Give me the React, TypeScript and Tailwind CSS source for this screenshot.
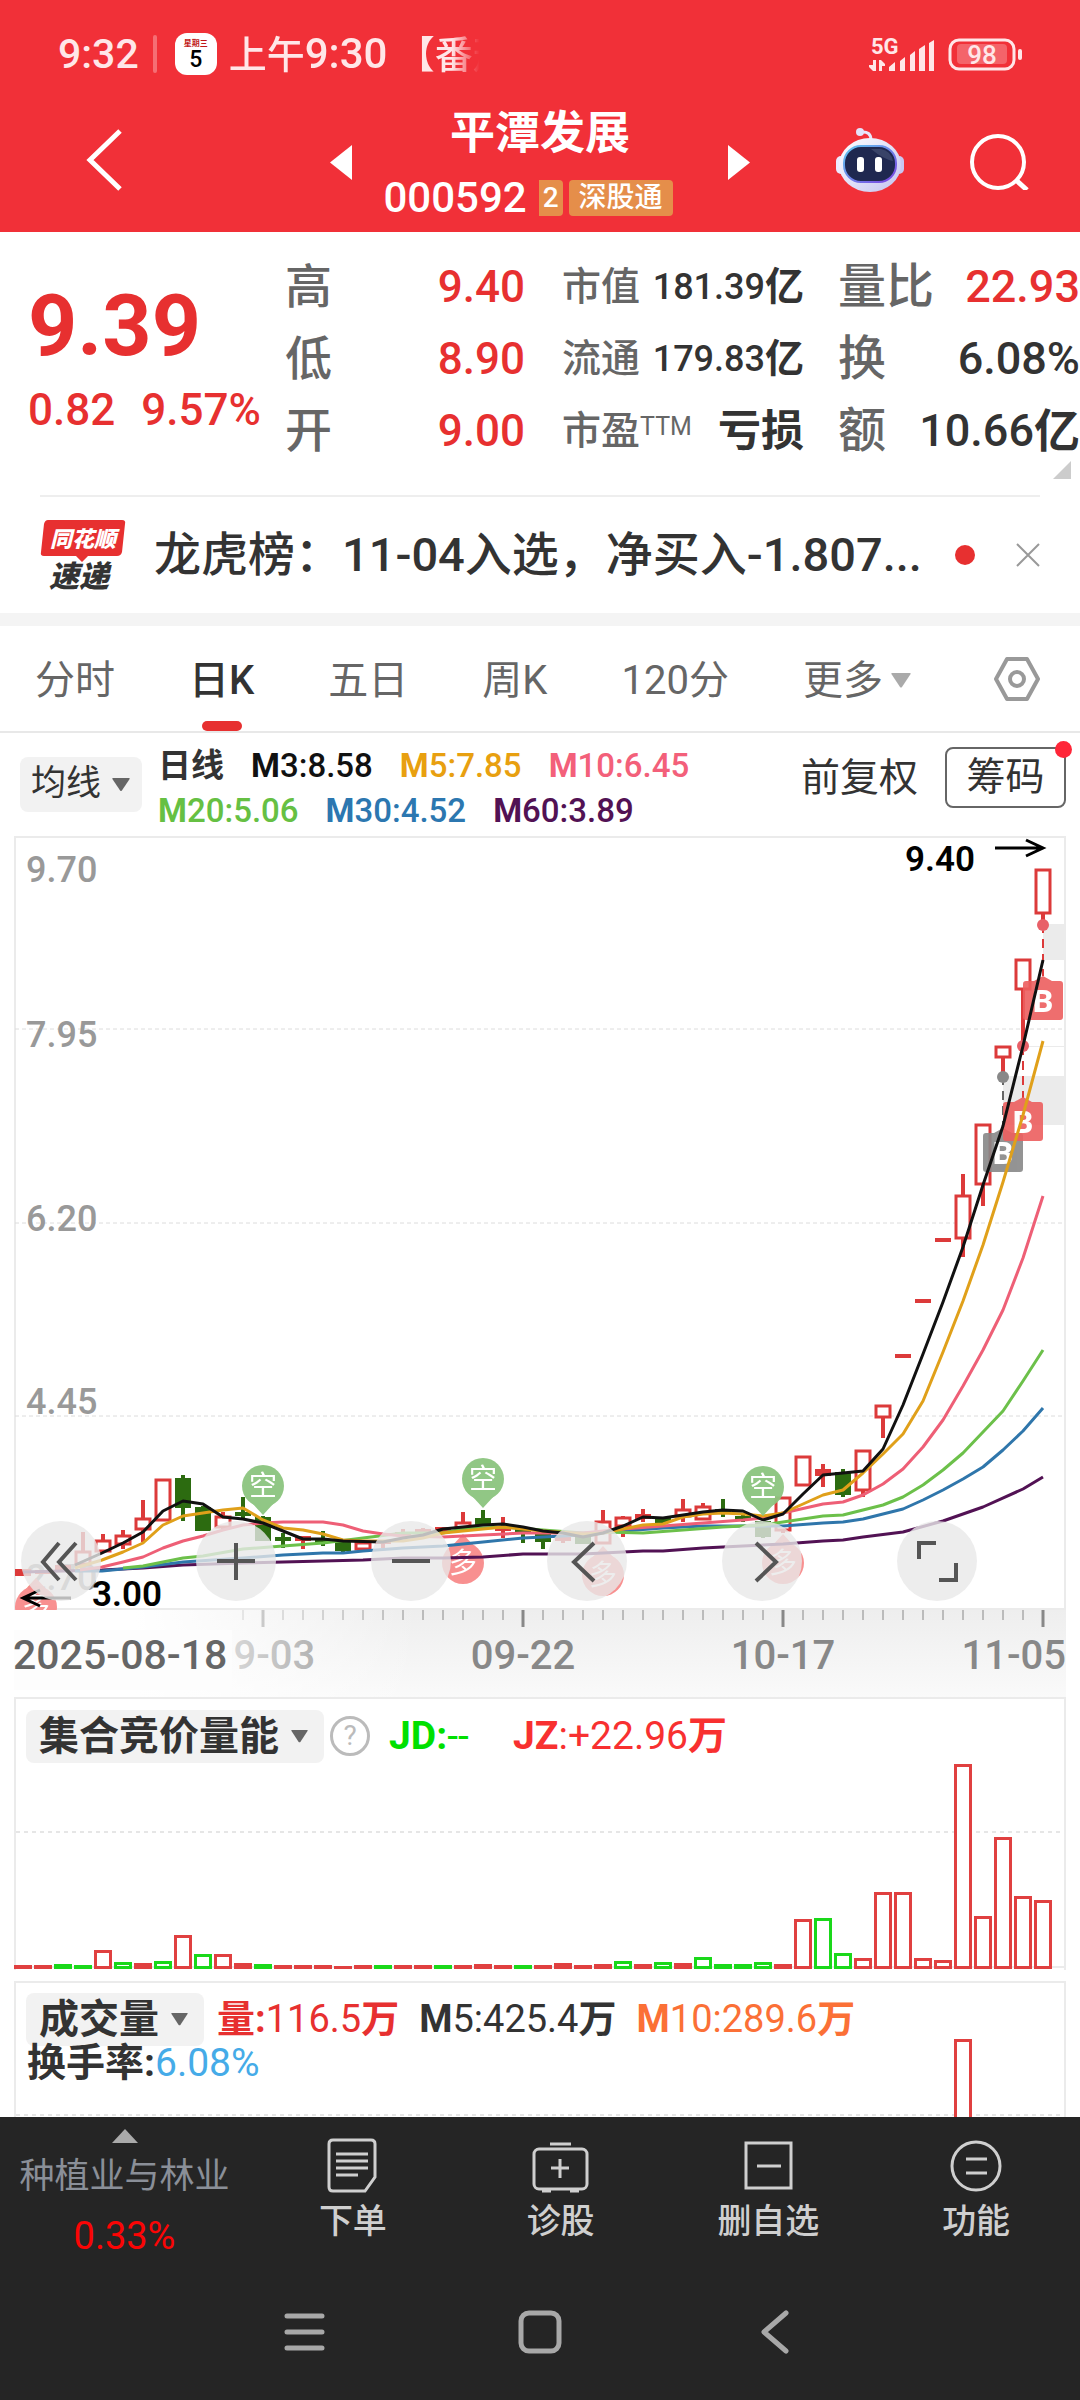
import React, { useState } from 'react';
import clsx from 'clsx';

type Tone = 'r' | 'g';
// [index, body top, body bottom, high, low, tone, filled]
type Candle = [number, number, number, number, number, Tone, boolean?];

const STEP = 20;
const candleX = (i: number) => 23 + i * STEP;

const candles: Candle[] = [
  [0, 1570, 1575, 1570, 1575, 'r', true],
  [1, 1571, 1573, 1571, 1573, 'r', true],
  [2, 1566, 1570, 1566, 1570, 'r', true],
  [3, 1552, 1564, 1532, 1564, 'r'],
  [4, 1541, 1551, 1534, 1551, 'r'],
  [5, 1536, 1544, 1530, 1549, 'r'],
  [6, 1519, 1529, 1500, 1542, 'r'],
  [7, 1480, 1520, 1480, 1520, 'r'],
  [8, 1479, 1507, 1475, 1521, 'g'],
  [9, 1508, 1530, 1506, 1531, 'g'],
  [10, 1517, 1527, 1512, 1530, 'r'],
  [11, 1513, 1515, 1497, 1519, 'g'],
  [12, 1518, 1540, 1516, 1541, 'g'],
  [13, 1538, 1540, 1533, 1548, 'g'],
  [14, 1537, 1540, 1537, 1549, 'r', true],
  [15, 1540, 1542, 1531, 1546, 'g'],
  [16, 1542, 1550, 1542, 1552, 'g'],
  [17, 1543, 1549, 1543, 1549, 'r'],
  [18, 1541, 1543, 1541, 1548, 'r', true],
  [19, 1533, 1535, 1529, 1537, 'r', true],
  [20, 1530, 1532, 1528, 1534, 'r', true],
  [21, 1528, 1532, 1528, 1532, 'r', true],
  [22, 1523, 1528, 1512, 1530, 'r'],
  [23, 1519, 1524, 1510, 1526, 'g'],
  [24, 1528, 1530, 1517, 1538, 'r', true],
  [25, 1530, 1533, 1528, 1543, 'g'],
  [26, 1535, 1541, 1533, 1549, 'g'],
  [27, 1538, 1540, 1536, 1543, 'r', true],
  [28, 1536, 1543, 1536, 1543, 'g'],
  [29, 1522, 1543, 1510, 1543, 'r'],
  [30, 1518, 1526, 1516, 1537, 'r'],
  [31, 1515, 1518, 1509, 1522, 'r', true],
  [32, 1518, 1522, 1518, 1526, 'g'],
  [33, 1510, 1516, 1499, 1522, 'r'],
  [34, 1507, 1519, 1503, 1519, 'r'],
  [35, 1510, 1512, 1499, 1517, 'g'],
  [36, 1517, 1519, 1515, 1522, 'g'],
  [37, 1522, 1536, 1522, 1538, 'g'],
  [38, 1498, 1530, 1498, 1533, 'r'],
  [39, 1457, 1485, 1457, 1485, 'r'],
  [40, 1470, 1475, 1464, 1487, 'r', true],
  [41, 1473, 1494, 1469, 1497, 'g'],
  [42, 1451, 1490, 1451, 1497, 'r'],
  [43, 1406, 1417, 1406, 1438, 'r'],
  [44, 1355, 1357, 1355, 1357, 'r', true],
  [45, 1300, 1302, 1300, 1302, 'r', true],
  [46, 1239, 1241, 1239, 1241, 'r', true],
  [47, 1196, 1238, 1174, 1257, 'r'],
  [48, 1125, 1184, 1125, 1206, 'r'],
  [49, 1047, 1057, 1047, 1076, 'r'],
  [50, 960, 989, 960, 1046, 'r'],
  [51, 870, 913, 870, 924, 'r'],
];

const averages = [
  { color: '#521254', points: '23,1572 102,1570 143,1568 183,1565 243,1563 283,1562 323,1561 363,1560 403,1558 443,1558 483,1557 523,1554 583,1554 643,1551 663,1551 703,1548 743,1546 783,1544 823,1541 843,1540 863,1537 903,1532 943,1521 983,1507 1023,1489 1043,1477' },
  { color: '#2f76ab', points: '75,1571 102,1571 143,1567 183,1562 243,1558 283,1555 323,1553 343,1553 363,1551 403,1548 443,1546 483,1542 523,1538 543,1537 583,1535 623,1531 663,1528 703,1526 783,1526 823,1523 843,1522 863,1519 903,1509 923,1500 943,1490 963,1479 983,1467 1003,1450 1023,1431 1043,1408' },
  { color: '#6cc04a', points: '123,1568 143,1566 183,1558 203,1556 243,1549 283,1546 323,1543 363,1538 403,1533 443,1533 463,1529 503,1527 543,1530 583,1533 603,1532 643,1533 683,1530 723,1527 763,1525 783,1522 823,1516 843,1515 863,1510 883,1505 903,1497 923,1485 943,1470 963,1453 1003,1411 1023,1381 1043,1350' },
  { color: '#ee5f76', points: '80,1570 102,1567 123,1562 143,1557 163,1548 183,1541 203,1536 223,1530 243,1525 263,1523 283,1522 323,1522 343,1525 363,1531 383,1534 403,1536 443,1537 483,1535 523,1533 583,1533 623,1529 663,1526 703,1523 743,1520 763,1518 783,1513 823,1504 843,1502 863,1495 883,1484 903,1469 923,1447 943,1420 963,1386 983,1350 1003,1310 1023,1258 1043,1196' },
  { color: '#e0a01a', points: '75,1568 102,1560 123,1552 143,1543 163,1525 183,1516 203,1513 223,1510 243,1508 263,1520 283,1528 303,1530 323,1534 343,1540 363,1541 403,1541 423,1538 443,1533 463,1531 503,1527 543,1531 583,1534 603,1533 623,1529 643,1525 663,1524 683,1517 703,1514 723,1513 743,1514 763,1516 783,1513 803,1504 823,1495 843,1490 863,1473 883,1454 903,1434 923,1401 943,1352 963,1301 983,1245 1003,1182 1023,1115 1043,1041' },
  { color: '#111111', points: '75,1565 102,1553 123,1543 143,1532 163,1511 183,1501 203,1504 223,1517 243,1519 263,1523 283,1531 303,1539 323,1539 343,1541 383,1542 403,1538 423,1535 443,1529 463,1527 483,1525 503,1524 523,1527 543,1531 563,1533 583,1537 603,1533 623,1526 643,1517 663,1518 683,1515 703,1512 723,1510 743,1511 763,1520 783,1514 803,1494 823,1475 843,1473 863,1471 883,1449 903,1405 923,1354 943,1302 963,1247 983,1185 1003,1126 1023,1046 1043,960' },
];

const auctionBars: [number, Tone][] = [
  [4, 'r'], [4, 'r'], [5, 'g'], [4, 'g'], [19, 'r'], [7, 'g'], [6, 'r'], [8, 'g'], [34, 'r'], [15, 'g'],
  [15, 'r'], [6, 'r'], [5, 'g'], [4, 'r'], [4, 'r'], [4, 'r'], [3, 'r'], [4, 'r'], [4, 'g'], [4, 'r'],
  [4, 'r'], [4, 'g'], [4, 'r'], [5, 'r'], [4, 'r'], [4, 'g'], [4, 'r'], [6, 'r'], [4, 'r'], [5, 'r'],
  [8, 'g'], [5, 'r'], [7, 'g'], [6, 'r'], [12, 'g'], [5, 'g'], [5, 'g'], [7, 'g'], [5, 'r'], [50, 'r'],
  [51, 'g'], [16, 'g'], [11, 'r'], [77, 'r'], [77, 'r'], [11, 'r'], [9, 'r'], [205, 'r'], [53, 'r'],
  [132, 'r'], [73, 'r'], [69, 'r'],
];

const quoteRows = [
  { a: '高', av: '9.40', b: '市值', bv: '181.39', unit: '亿', c: '量比', cv: '22.93', cu: '', up: true },
  { a: '低', av: '8.90', b: '流通', bv: '179.83', unit: '亿', c: '换', cv: '6.08%', cu: '', up: false },
  { a: '开', av: '9.00', b: '市盈', bv: '', unit: '亏损', c: '额', cv: '10.66', cu: '亿', up: false },
];

const maRows = [
  [
    { label: '3', value: '8.58', color: 'text-[#111111]' },
    { label: '5', value: '7.85', color: 'text-[#e8a010]' },
    { label: '10', value: '6.45', color: 'text-[#f3607a]' },
  ],
  [
    { label: '20', value: '5.06', color: 'text-[#66c043]' },
    { label: '30', value: '4.52', color: 'text-[#2c77b0]' },
    { label: '60', value: '3.89', color: 'text-[#521254]' },
  ],
];

const Caret = ({ className }: { className?: string }) => (
  <svg viewBox="0 0 20 15" className={clsx('shrink-0', className)} fill="currentColor" aria-hidden="true">
    <path d="M1 0h18q1 0 .6 1L11 14q-1 1-2 0L.4 1Q0 0 1 0z" />
  </svg>
);

const StatusBar = () => (
  <div className="flex h-[108px] items-center pl-[58px] pr-[58px] text-[#ffe6e8]">
    <span className="text-[41px] font-medium leading-none">9:32</span>
    <span className="ml-[14px] h-[38px] w-1 rounded bg-white/30" />
    <span className="ml-[18px] flex size-[42px] flex-col items-center rounded-xl bg-white pt-[7px] text-black">
      <span className="text-[8px] font-bold leading-[8px] text-[#c01818]">星期三</span>
      <span className="text-[23px] font-medium leading-[23px]">5</span>
    </span>
    <span className="ml-3 w-[253px] overflow-hidden whitespace-nowrap text-[38px] font-medium leading-[54px] [mask-image:linear-gradient(to_right,black_88%,transparent_99%)]">
      上午<span className="text-[42px]">9:30</span> 【番茄
    </span>
    <div className="ml-auto flex items-center gap-3">
      <svg viewBox="868 34 68 36" className="h-9 w-[68px]" fill="currentColor" aria-label="5G">
        <text x="871" y="52" fontSize="22" fontWeight="700">5G</text>
        <path d="M873 58h3v11h-3l-4-4v-2h4zM879 58h2l4 4v2h-3v5h-3z" />
        <path d="M889 69v-4l6-5v9zM900 69V59l5-4v14zM910 69V53l5-4v20zM919 69V47l6-4v26zM929 69V41l5-3v31z" />
      </svg>
      <svg viewBox="948 36 74 35" className="h-[35px] w-[74px]" aria-label="98%">
        <rect x="950" y="39" width="64" height="29" rx="9" fill="none" stroke="currentColor" strokeWidth="3" />
        <rect x="957" y="43" width="50" height="20" rx="4" fill="#ffffff" opacity=".25" />
        <rect x="1018" y="48" width="4" height="11" rx="2" fill="currentColor" />
        <text x="982" y="63" fontSize="26" fontWeight="500" textAnchor="middle" fill="currentColor">98</text>
      </svg>
    </div>
  </div>
);

const Robot = () => (
  <svg viewBox="0 0 70 66" className="h-[66px] w-[70px]" aria-hidden="true">
    <defs>
      <linearGradient id="shell" x1="0" y1="0" x2="1" y2="1">
        <stop offset="0" stopColor="#ffffff" />
        <stop offset="1" stopColor="#c3c2f0" />
      </linearGradient>
      <linearGradient id="rim" x1="0" y1="0" x2="1" y2="1">
        <stop offset="0" stopColor="#5fc8f0" />
        <stop offset="1" stopColor="#7b3fe0" />
      </linearGradient>
    </defs>
    <path d="M26 5q10-1 10 8" fill="none" stroke="#e8e6fb" strokeWidth="3" />
    <circle cx="25" cy="5" r="4" fill="#e4e2fa" />
    <rect x="1" y="29" width="10" height="18" rx="5" fill="#eceaff" />
    <rect x="59" y="29" width="10" height="18" rx="5" fill="#c9c7f2" />
    <ellipse cx="35" cy="38" rx="31" ry="27" fill="url(#shell)" />
    <rect x="9" y="19" width="52" height="36" rx="17" fill="#1f2850" stroke="url(#rim)" strokeWidth="2" />
    <path d="M36 22h10q10 2 12 12-10-2-22-12z" fill="#4b5578" opacity=".6" />
    <rect x="22" y="30" width="7" height="15" rx="3" fill="#ffffff" />
    <rect x="40" y="30" width="7" height="15" rx="3" fill="#ffffff" />
  </svg>
);

const Header = () => (
  <header className="bg-[#f13038]">
    <StatusBar />
    <div className="grid h-[124px] grid-cols-[1fr_420px_1fr] items-start text-white">
      <button aria-label="返回" className="ml-[86px] mt-[20px] w-9">
        <svg viewBox="0 0 36 64" className="h-16 w-9" fill="none" stroke="currentColor" strokeWidth="5">
          <path d="M34 3 4 32l30 29" />
        </svg>
      </button>
      <div className="flex justify-between">
        <button aria-label="上一只" className="mt-[37px] h-[35px]">
          <svg viewBox="0 0 22 35" className="h-[35px] w-[22px]" fill="currentColor"><path d="M22 0v35L0 17.500z" /></svg>
        </button>
        <div className="flex flex-col items-center">
          <h1 className="text-[45px] font-bold leading-[52px]">平潭发展</h1>
          <div className="mt-[15px] flex items-center pr-6 leading-[46px]">
            <span className="text-[42px] font-medium">000592</span>
            <span className="ml-3 h-9 rounded-r bg-[#e58e4a] px-1 text-[28px] font-medium leading-9">2</span>
            <span className="ml-[6px] h-9 rounded bg-[#e58e4a] px-[10px] text-[28px] font-medium leading-9">深股通</span>
          </div>
        </div>
        <button aria-label="下一只" className="mt-[37px] h-[35px]">
          <svg viewBox="0 0 22 35" className="h-[35px] w-[22px]" fill="currentColor"><path d="M0 0v35l22-17.500z" /></svg>
        </button>
      </div>
      <div className="mt-[19px] flex justify-end pr-[51px]">
        <button aria-label="智能助手"><Robot /></button>
        <button aria-label="搜索" className="ml-[64px]">
          <svg viewBox="0 0 60 60" className="size-[60px]" fill="none" stroke="currentColor" strokeWidth="4">
            <circle cx="29" cy="32" r="26" />
            <path d="m47 50 11 10" strokeWidth="5" />
          </svg>
        </button>
      </div>
    </div>
  </header>
);

const Quote = () => (
  <section className="relative flex h-[263px] pt-[19px]">
    <div className="w-[285px] shrink-0 pl-[28px] pt-[31px] font-medium text-[#e73030]">
      <div className="text-[86px] font-bold leading-[88px]">9.39</div>
      <div className="mt-[15px] flex gap-[26px] text-[44px] leading-[50px]">
        <span>0.82</span>
        <span>9.57%</span>
      </div>
    </div>
    <dl className="flex-1">
      {quoteRows.map((row) => (
        <div key={row.a} className="grid h-[72px] grid-cols-[240px_37px_242px_34px_1fr] leading-[72px] text-[#333]">
          <div className="flex justify-between">
            <dt className="text-[47px] font-medium text-[#666]">{row.a}</dt>
            <dd className="text-[44px] font-medium text-[#e73030]">{row.av}</dd>
          </div>
          <div className="col-start-3 flex justify-between">
            <dt className="text-[39px] font-medium text-[#666]">
              {row.b}
              {!row.bv && <sup className="top-0 align-[9px] text-[25px] font-normal leading-none">TTM</sup>}
            </dt>
            <dd className="flex font-medium">
              <span className="text-[36px]">{row.bv}</span>
              <span className={clsx('font-bold', row.bv ? 'text-[39px]' : 'text-[43px]')}>{row.unit}</span>
            </dd>
          </div>
          <div className="col-start-5 flex justify-between">
            <dt className="text-[48px] font-medium text-[#666]">{row.c}</dt>
            <dd className={clsx('flex text-[45px] font-medium', row.up && 'text-[#e73030]')}>
              {row.cv}
              <span className="text-[46px] font-bold">{row.cu}</span>
            </dd>
          </div>
        </div>
      ))}
    </dl>
    <svg viewBox="0 0 18 18" className="absolute bottom-4 right-[9px] size-[18px]" fill="#cccccc" aria-hidden="true">
      <path d="M18 0v18H0z" />
    </svg>
  </section>
);

const NewsBar = () => (
  <section className="border-b-[13px] border-[#f4f4f4]">
    <div className="mx-10 flex h-[118px] items-center border-t-2 border-[#eeeeee]">
      <svg viewBox="0 0 86 70" className="h-[70px] w-[86px] shrink-0" aria-label="同花顺速递">
        <path d="M8 0h74q4 0 3 4l-3 28q-1 4-5 4H48l-6 6-6-6H4q-4 0-3-4L4 4q1-4 4-4z" fill="#e73030" />
        <text x="10" y="27" fontSize="22" fontWeight="900" fontStyle="italic" fill="#ffffff">同花顺</text>
        <text x="9" y="67" fontSize="30" fontWeight="900" fontStyle="italic" fill="#333333">速递</text>
      </svg>
      <a href="#news" className="ml-7 flex-1 truncate text-[47px] font-medium leading-[64px] text-[#333]">
        龙虎榜：11-04入选，净买入-1.807...
      </a>
      <span className="ml-4 size-5 rounded-full bg-[#e73030]" />
      <button aria-label="关闭" className="ml-[41px]">
        <svg viewBox="0 0 24 24" className="size-6" stroke="#999999" strokeWidth="2"><path d="m1 1 22 22M23 1 1 23" /></svg>
      </button>
    </div>
  </section>
);

const Tabs = () => {
  const [active, setActive] = useState('日K');
  const tabs = ['分时', '日K', '五日', '周K', '120分'];
  return (
    <nav className="flex h-[107px] items-stretch justify-between border-b-2 border-[#e8e8e8] pl-[35px] pr-[39px] text-[40px] text-[#666]">
      {tabs.map((tab) => (
        <button
          key={tab}
          onClick={() => setActive(tab)}
          className={clsx('relative pt-1', active === tab && 'font-medium text-[#333]')}
        >
          {tab}
          {active === tab && <span className="absolute inset-x-0 bottom-0 mx-auto h-[10px] w-10 rounded-full bg-[#e73030]" />}
        </button>
      ))}
      <button className="flex items-center gap-2 pt-1">
        更多
        <Caret className="w-5 text-[#aaaaaa]" />
      </button>
      <button aria-label="设置" className="ml-2">
        <svg viewBox="0 0 48 46" className="h-[46px] w-12" fill="none" stroke="#999999" strokeWidth="4" strokeLinejoin="round">
          <path d="M14 3h20l11 20-11 20H14L3 23z" />
          <circle cx="24" cy="23" r="7" />
        </svg>
      </button>
    </nav>
  );
};

const MaBar = () => (
  <section className="flex h-[103px] pl-5 pr-[14px] pt-[10px]">
    <button className="mt-[14px] flex h-[55px] w-[122px] items-center justify-between rounded-lg bg-[#f2f2f2] pl-[11px] pr-3 text-[35px] text-[#333]">
      均线
      <Caret className="w-[18px] text-[#666]" />
    </button>
    <div className="ml-4 text-[33px] font-medium leading-[45px]">
      {maRows.map((row, i) => (
        <div key={i} className="flex gap-[27px]">
          {i === 0 && <span className="font-bold text-[#333]">日线</span>}
          {row.map((ma) => (
            <span key={ma.label} className={ma.color}>
              <b>M</b>{ma.label}:{ma.value}
            </span>
          ))}
        </div>
      ))}
    </div>
    <button className="ml-auto h-[70px] text-[39px] leading-[70px] text-[#333]">前复权</button>
    <button className="relative ml-[27px] mt-[4px] h-[61px] w-[121px] rounded-lg border-2 border-[#666] text-[39px] leading-[57px] text-[#333]">
      筹码
      <span className="absolute -right-2 -top-2 size-[17px] rounded-full bg-[#ff2638]" />
    </button>
  </section>
);

const Balloon = ({ x, y, down }: { x: number; y: number; down?: boolean }) => (
  <g opacity=".95">
    <circle cx={x} cy={y} r="21" fill={down ? '#8cc57f' : '#f88b8b'} />
    <path
      d={down ? `M${x - 11} ${y + 17}L${x} ${y + 29}l11-12z` : `M${x - 11} ${y - 17}L${x} ${y - 29}l11 12z`}
      fill={down ? '#8cc57f' : '#f88b8b'}
    />
    <text x={x} y={y + 10} fontSize="28" textAnchor="middle" fill="#ffffff">{down ? '空' : '多'}</text>
  </g>
);

const Badge = ({ x, y, fill }: { x: number; y: number; fill: string }) => (
  <g opacity=".9">
    <path d={`M${x - 17} ${y - 19}h8l9-5 9 5h8q3 0 3 3v33q0 3-3 3h-34q-3 0-3-3v-33q0-3 3-3z`} fill={fill} />
    <text x={x} y={y + 12} fontSize="32" fontWeight="800" textAnchor="middle" fill="#ffffff">B</text>
  </g>
);

const controls = [
  { name: '最左', d: 'M38 22 22 41l16 18M55 22 38 41l17 18' },
  { name: '放大', d: 'M40 22v37M21 40h38' },
  { name: '缩小', d: 'M21 40h38' },
  { name: '左移', d: 'M47 22 27 41l20 19' },
  { name: '右移', d: 'M34 22l20 19-20 19' },
  { name: '全屏', d: 'M22 38V22h17M59 42v17H42' },
];

const KLine = () => (
  <section className="relative mx-[14px]">
    <svg viewBox="14 836 1052 774" className="block w-full" aria-label="日K线图">
      <rect x="15" y="837" width="1050" height="772" fill="none" stroke="#ebebeb" strokeWidth="2" />
      {[1029, 1223, 1416].map((y) => (
        <path key={y} d={`M15 ${y}H1065`} stroke="#dcdcdc" strokeWidth="1" strokeDasharray="4 3" />
      ))}
      <g fontSize="36" fontWeight="500" fill="#999999">
        <text x="26" y="882">9.70</text>
        <text x="26" y="1047">7.95</text>
        <text x="26" y="1231">6.20</text>
        <text x="26" y="1414">4.45</text>
        <text x="26" y="1590">2.70</text>
      </g>
      <g fill="#ebebeb">
        <rect x="1043" y="924" width="22" height="36" />
        <rect x="1003" y="1076" width="62" height="49" />
        <rect x="1023" y="1046" width="42" height="1" />
      </g>
      {candles.map(([i, top, bottom, high, low, tone, filled]) => {
        const x = candleX(i);
        const color = tone === 'r' ? '#dc3a3a' : '#2c6b10';
        const solid = filled || tone === 'g';
        return (
          <g key={i} stroke={color}>
            {high < top && <path d={`M${x} ${high}V${top}`} strokeWidth="4" />}
            {low > bottom && <path d={`M${x} ${bottom}V${low}`} strokeWidth="4" />}
            {solid ? (
              <rect x={x - 8} y={top - 1} width="16" height={bottom - top + 2} fill={color} stroke="none" />
            ) : (
              <rect x={x - 7} y={top} width="14" height={bottom - top} fill="#ffffff" strokeWidth="3" />
            )}
          </g>
        );
      })}
      <path d="M1043 924v52M1023 1046v52" stroke="#dc3a3a" strokeWidth="2" strokeDasharray="9 6" />
      <path d="M1003 1076v54" stroke="#666666" strokeWidth="2" strokeDasharray="9 6" />
      <circle cx="1043" cy="925" r="6" fill="#e86068" />
      <circle cx="1023" cy="1046" r="6" fill="#e86068" />
      <circle cx="1003" cy="1077" r="6" fill="#888888" />
      <Badge x={1003} y={1152} fill="#888888" />
      <Badge x={1023} y={1121} fill="#ed5f5f" />
      <Badge x={1043} y={1000} fill="#ed5f5f" />
      <Balloon x={36} y={1607} />
      <Balloon x={463} y={1563} />
      <Balloon x={603} y={1575} />
      <Balloon x={783} y={1563} />
      {averages.map((line) => (
        <polyline key={line.color} points={line.points} fill="none" stroke={line.color} strokeWidth="3" strokeLinejoin="round" />
      ))}
      <Balloon x={263} y={1486} down />
      <Balloon x={483} y={1479} down />
      <Balloon x={763} y={1487} down />
      <g fill="none" stroke="#000000" strokeWidth="3">
        <path d="M995 848h47M1026 840l17 8-17 8M71 1598H24M40 1590l-17 8 17 8" />
      </g>
      <g fontSize="35" fontWeight="600" fill="#000000">
        <text x="905" y="871">9.40</text>
        <text x="92" y="1606">3.00</text>
      </g>
    </svg>
    <div className="absolute bottom-[9px] left-[7px] right-[89px] flex justify-between">
      {controls.map((c) => (
        <button key={c.name} aria-label={c.name} className="size-20 rounded-full bg-[#e8e8e8]/80">
          <svg viewBox="0 0 80 80" className="size-20" fill="none" stroke="#555555" strokeWidth="4">
            <path d={c.d} />
          </svg>
        </button>
      ))}
    </div>
  </section>
);

const TimeAxis = () => (
  <svg viewBox="14 1610 1052 87" className="mx-[14px] block bg-linear-to-b from-[#eeeeee] to-[#fafafa]" aria-label="时间轴">
    <defs>
      <linearGradient id="axis-fade" gradientUnits="userSpaceOnUse" x1="14" y1="0" x2="420" y2="0">
        <stop offset=".3" stopColor="#ffffff" />
        <stop offset="1" stopColor="#ffffff" stopOpacity="0" />
      </linearGradient>
    </defs>
    {Array.from({ length: 41 }, (_, k) => 243 + k * STEP).map((x) => {
      const major = (x - 263) % 260 === 0;
      return <path key={x} d={major ? `M${x} 1610v17` : `M${x} 1610v10`} stroke="#888888" strokeWidth={major ? 3 : 1} />;
    })}
    <g fontSize="40" fontWeight="500" fill="#888888">
      <text x="263" y="1669" textAnchor="middle">09-03</text>
      <text x="523" y="1669" textAnchor="middle">09-22</text>
      <text x="783" y="1669" textAnchor="middle">10-17</text>
      <text x="1066" y="1669" textAnchor="end">11-05</text>
    </g>
    <rect x="14" y="1610" width="406" height="87" fill="url(#axis-fade)" />
    <rect x="14" y="1630" width="218" height="60" fill="#fdfdfd" />
    <text x="13" y="1669" fontSize="41" fontWeight="500" fill="#666666">2025-08-18</text>
  </svg>
);

const Picker = ({ children }: { children: React.ReactNode }) => (
  <button className="flex h-[53px] shrink-0 items-center gap-3 rounded-lg bg-[#f2f2f2] pl-[13px] pr-4 text-[40px] font-bold text-[#333]">
    {children}
    <Caret className="w-[17px] text-[#666]" />
  </button>
);

const AuctionPanel = () => (
  <section className="mx-[14px] border-x-2 border-t-2 border-[#ebebeb]">
    <div className="flex h-[64px] items-end whitespace-nowrap pl-[10px]">
      <Picker>集合竞价量能</Picker>
      <button aria-label="说明" className="mb-[7px] ml-[6px] size-[40px] rounded-full border-[3px] border-[#bbbbbb] text-[28px] leading-[34px] text-[#bbbbbb]">?</button>
      <span className="ml-[19px] w-[106px] text-[39px] leading-[53px] text-[#00e000]"><b>JD:</b>--</span>
      <span className="ml-[18px] text-[39px] leading-[53px] text-[#f83030]"><b>JZ</b>:+22.96<b>万</b></span>
    </div>
    <svg viewBox="16 1763 1048 207" className="block w-full overflow-visible" aria-label="集合竞价量能柱状图">
      <path d="M16 1832H1064" stroke="#e6e6e6" strokeWidth="2" strokeDasharray="4 4" />
      <path d="M16 1967H1064" stroke="#ebebeb" strokeWidth="2" />
      {auctionBars.map(([h, tone], i) => (
        <g key={i}>
          <rect x={14 + i * STEP} y={1969 - h} width="18" height={h} fill={tone === 'r' ? '#e04040' : '#1ad81a'} />
          {h > 6 && <rect x={17 + i * STEP} y={1972 - h} width="12" height={h - 6} fill="#ffffff" />}
        </g>
      ))}
    </svg>
  </section>
);

const VolumePanel = () => (
  <section className="relative mx-[14px] mt-[11px] h-[136px] overflow-hidden border-x-2 border-t-2 border-[#ebebeb]">
    <svg viewBox="16 1983 1048 134" className="absolute inset-x-0 top-0 w-full" aria-hidden="true">
      <path d="M16 2115H1064" stroke="#e6e6e6" strokeWidth="2" strokeDasharray="4 4" />
      <rect x="954" y="2039" width="18" height="90" fill="#e04040" />
      <rect x="957" y="2042" width="12" height="90" fill="#ffffff" />
    </svg>
    <div className="relative flex h-[63px] items-end whitespace-nowrap pl-[10px] text-[38px] leading-[53px]">
      <Picker>成交量</Picker>
      <span className="ml-[13px] text-[#e73030]"><b>量:</b>116.5<b>万</b></span>
      <span className="ml-[20px] text-[#333]"><b>M</b>5:425.4<b>万</b></span>
      <span className="ml-[20px] text-[#fb7036]"><b>M</b>10:289.6<b>万</b></span>
    </div>
    <div className="relative pl-[11px] text-[39px] leading-[34px] text-[#333]">
      <b>换手率:</b><span className="text-[#45abe8]">6.08%</span>
    </div>
  </section>
);

const actions = [
  {
    name: '下单',
    icon: (
      <>
        <path d="M9 3h38q4 0 4 4v33L41 54H9q-4 0-4-4V7q0-4 4-4z" />
        <path d="M12 17h32M12 24h32M12 31h32M12 38h22" />
      </>
    ),
  },
  {
    name: '诊股',
    icon: (
      <>
        <rect x="2" y="12" width="53" height="40" rx="5" />
        <path d="M18 7h21M28 22v19M19 31h18M10 54h9M38 54h9" />
      </>
    ),
  },
  {
    name: '删自选',
    icon: (
      <>
        <rect x="6" y="6" width="45" height="45" />
        <path d="M17 29h24" />
      </>
    ),
  },
  {
    name: '功能',
    icon: (
      <>
        <circle cx="28" cy="29" r="24" />
        <path d="M18 22h21M18 36h21" />
      </>
    ),
  },
];

const BottomBar = () => (
  <footer className="bg-[#252525] text-[#cfcfcf]">
    <div className="flex h-[148px]">
      <button className="flex w-[249px] flex-col items-center pt-[12px] text-[35px]">
        <svg viewBox="0 0 26 14" className="h-[14px] w-[26px]" fill="#aaaaaa"><path d="M13 0l13 14H0z" /></svg>
        <span className="mt-[11px] leading-[46px] text-[#8a8f98]">种植业与林业</span>
        <span className="mt-[14px] text-[38px] leading-[44px] text-[#fb0505]">0.33%</span>
      </button>
      {actions.map((a) => (
        <button key={a.name} className="flex flex-1 flex-col items-center pt-[20px]">
          <svg viewBox="0 0 57 57" className="size-[57px]" fill="none" stroke="currentColor" strokeWidth="3">{a.icon}</svg>
          <span className="mt-1 text-[34px] font-medium leading-[46px]">{a.name}</span>
        </button>
      ))}
    </div>
    <div className="flex h-[135px] justify-center gap-[190px] pt-[44px] text-[#a8a8a8]">
      <button aria-label="菜单" className="size-[46px]">
        <svg viewBox="0 0 46 46" fill="none" stroke="currentColor" strokeWidth="5" strokeLinecap="round">
          <path d="M6 7h35M6 23h35M6 39h35" />
        </svg>
      </button>
      <button aria-label="主页" className="size-[46px]">
        <svg viewBox="0 0 46 46" fill="none" stroke="currentColor" strokeWidth="5">
          <rect x="4" y="4" width="38" height="38" rx="8" />
        </svg>
      </button>
      <button aria-label="后退" className="size-[46px]">
        <svg viewBox="0 0 46 46" fill="none" stroke="currentColor" strokeWidth="5" strokeLinecap="round" strokeLinejoin="round">
          <path d="M33 4 11 23l22 19" />
        </svg>
      </button>
    </div>
  </footer>
);

const App: React.FC = () => (
  <div className="min-h-screen bg-white font-[Roboto,'Noto_Sans_CJK_SC',sans-serif]">
    <Header />
    <Quote />
    <NewsBar />
    <Tabs />
    <MaBar />
    <KLine />
    <TimeAxis />
    <AuctionPanel />
    <VolumePanel />
    <BottomBar />
  </div>
);

export default App;
